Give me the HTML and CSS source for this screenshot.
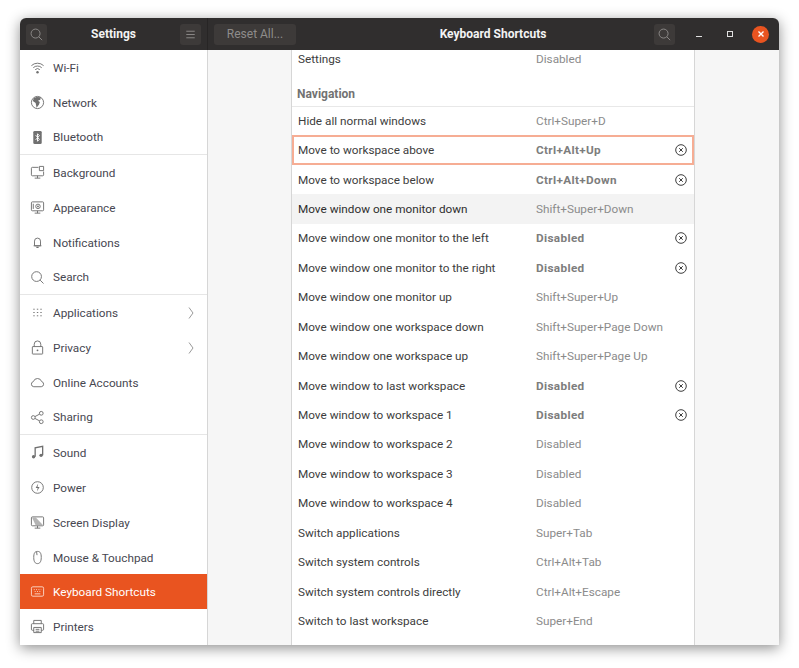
FILE: index.html
```html
<!DOCTYPE html>
<html lang="en">
<head>
    <meta charset="UTF-8">
    <title>Keyboard Shortcuts</title>
    <link rel="stylesheet" href="styles.css">
</head>
<body>
    <svg class="defs" aria-hidden="true">
        <symbol id="i-clear" viewBox="0 0 12 12">
            <circle cx="6" cy="6" r="5.3" fill="none" stroke="currentColor"/>
            <path d="M4.2 4.2l3.6 3.6M7.8 4.2l-3.6 3.6" fill="none" stroke="currentColor"/>
        </symbol>
    </svg>

    <div class="window">
        <header class="titlebar">
            <div class="bar-left">
                <button class="hb-btn icon-btn">
                    <svg viewBox="0 0 16 16" class="hb-icon"><circle cx="7" cy="7" r="4.8"/><path d="M10.5 10.5l3.5 3.5"/></svg>
                </button>
                <div class="bar-title">Settings</div>
                <button class="hb-btn icon-btn">
                    <svg viewBox="0 0 16 16" class="hb-icon"><path d="M3.5 4.5h9M3.5 8h9M3.5 11.5h9"/></svg>
                </button>
            </div>
            <div class="bar-right">
                <button class="hb-btn reset-btn">Reset All...</button>
                <div class="bar-title main-title">Keyboard Shortcuts</div>
                <button class="hb-btn icon-btn">
                    <svg viewBox="0 0 16 16" class="hb-icon"><circle cx="7" cy="7" r="4.8"/><path d="M10.5 10.5l3.5 3.5"/></svg>
                </button>
                <div class="win-controls">
                    <span class="win-btn"><span class="win-min"></span></span>
                    <span class="win-btn"><span class="win-max"></span></span>
                    <span class="win-btn win-close">
                        <svg viewBox="0 0 16 16"><path d="M5.5 5.5l5 5M10.5 5.5l-5 5"/></svg>
                    </span>
                </div>
            </div>
        </header>

        <div class="main">
            <nav class="sidebar">
                <div class="nav-item">
                    <svg viewBox="0 0 16 16" class="nav-icon"><path d="M1.5 6a9.5 9.5 0 0 1 13 0M3.5 8.2a6.6 6.6 0 0 1 9 0M5.5 10.3a3.6 3.6 0 0 1 5 0"/><circle cx="8" cy="13" r="1.3" class="solid"/></svg>
                    Wi-Fi
                </div>
                <div class="nav-item">
                    <svg viewBox="0 0 16 16" class="nav-icon"><circle cx="8" cy="8" r="6.5"/><path d="M7 2L4 3.5 3 6.5l3 2 1 5 2.500-3 1-3-2-1.500L11 5l.5-2.500z" class="solid"/></svg>
                    Network
                </div>
                <div class="nav-item nav-end">
                    <svg viewBox="0 0 16 16" class="nav-icon"><rect x="3.5" y="1" width="9" height="14" rx="1.5" class="solid"/><path d="M6 5.5l4 4.5-2 2V4l2 2-4 4.5" class="inv"/></svg>
                    Bluetooth
                </div>
                <div class="nav-item">
                    <svg viewBox="0 0 16 16" class="nav-icon"><path d="M9 2.5H2.5a1 1 0 0 0-1 1v7a1 1 0 0 0 1 1h11a1 1 0 0 0 1-1V7M5 14h6M8 11.5V14"/><path d="M10 1.5h4.500V6H10z"/></svg>
                    Background
                </div>
                <div class="nav-item">
                    <svg viewBox="0 0 16 16" class="nav-icon"><rect x="1.5" y="2" width="13" height="9.5" rx="1"/><path d="M5 14h6M8 11.500V14M3.500 4v5.500"/><circle cx="8.5" cy="6.8" r="2.4"/><circle cx="8.5" cy="6.8" r="1" class="solid"/></svg>
                    Appearance
                </div>
                <div class="nav-item">
                    <svg viewBox="0 0 16 16" class="nav-icon"><path d="M4.800 11.500V6.500a3.200 3.200 0 0 1 6.400 0v5zM3.800 11.500h8.400"/><path d="M6.800 13.200h2.400" class="thick"/></svg>
                    Notifications
                </div>
                <div class="nav-item nav-end">
                    <svg viewBox="0 0 16 16" class="nav-icon"><circle cx="7" cy="7" r="5.2"/><path d="M10.800 10.800l3.600 3.600"/></svg>
                    Search
                </div>
                <div class="nav-item">
                    <svg viewBox="0 0 16 16" class="nav-icon dots"><path d="M3.500 4.500h1.500M7.300 4.500h1.500M11 4.500h1.500M3.500 8h1.500M7.300 8h1.500M11 8h1.500M3.500 11.500h1.500M7.300 11.500h1.500M11 11.500h1.500"/></svg>
                    Applications
                    <svg viewBox="0 0 8 14" class="chevron"><path d="M2 1.500l4 5.500-4 5.500"/></svg>
                </div>
                <div class="nav-item">
                    <svg viewBox="0 0 16 16" class="nav-icon"><rect x="2.5" y="7" width="11" height="8" rx=".5"/><path d="M4.500 7V4.500a3.500 3.500 0 0 1 7 0V7"/><circle cx="8" cy="11" r="1" class="solid"/></svg>
                    Privacy
                    <svg viewBox="0 0 8 14" class="chevron"><path d="M2 1.500l4 5.500-4 5.500"/></svg>
                </div>
                <div class="nav-item">
                    <svg viewBox="0 0 16 16" class="nav-icon"><path d="M4 12.500a2.800 2.800 0 0 1-.4-5.500 4.600 4.600 0 0 1 8.800 0 2.800 2.800 0 0 1-.4 5.500z"/></svg>
                    Online Accounts
                </div>
                <div class="nav-item nav-end">
                    <svg viewBox="0 0 16 16" class="nav-icon"><circle cx="3.5" cy="8" r="2"/><circle cx="12" cy="3.5" r="2"/><circle cx="12" cy="12.5" r="2"/><path d="M5.300 7l4.900-2.600M5.300 9l4.900 2.600"/></svg>
                    Sharing
                </div>
                <div class="nav-item">
                    <svg viewBox="0 0 16 16" class="nav-icon"><path d="M5.500 12.500V3l8-1.500v9.500" class="thick"/><circle cx="3.8" cy="12.5" r="1.8" class="solid"/><circle cx="11.8" cy="11" r="1.8" class="solid"/></svg>
                    Sound
                </div>
                <div class="nav-item">
                    <svg viewBox="0 0 16 16" class="nav-icon"><circle cx="8" cy="8" r="6.2"/><path d="M8.800 3.800L6 8.600h2.200L7.400 12.200 10.200 7.400H8z" class="solid"/></svg>
                    Power
                </div>
                <div class="nav-item">
                    <svg viewBox="0 0 16 16" class="nav-icon"><rect x="1.5" y="2" width="13" height="9.5" rx="1"/><path d="M5 14h6M8 11.500V14"/><path d="M2 2.500h4l8 8.500H6z" class="solid light"/></svg>
                    Screen Display
                </div>
                <div class="nav-item">
                    <svg viewBox="0 0 16 16" class="nav-icon"><path d="M8 1.500c3 0 4 2 4 6.500 0 4.500-1.500 6.500-4 6.500S4 12.500 4 8c0-4.500 1-6.500 4-6.500zM7 1.800l.5 3.700"/></svg>
                    Mouse &amp; Touchpad
                </div>
                <div class="nav-item selected">
                    <svg viewBox="0 0 16 16" class="nav-icon"><rect x="1.5" y="3" width="13" height="10" rx="1.5"/><path d="M4 6h1M6.500 6h1M9 6h1M11.500 6h.5M5 8h1M7.500 8h1M10 8h1M5 10.500h6"/></svg>
                    Keyboard Shortcuts
                </div>
                <div class="nav-item">
                    <svg viewBox="0 0 16 16" class="nav-icon"><path d="M4 5V1.500h8V5M4 12H2.500a1 1 0 0 1-1-1V6a1 1 0 0 1 1-1h11a1 1 0 0 1 1 1v5a1 1 0 0 1-1 1H12"/><path d="M4 9h8v5.500H4zM6 11h4M6 13h4"/></svg>
                    Printers
                </div>
            </nav>

            <section class="content">
                <div class="panel">
                    <div class="shortcuts">
                        <div class="row"><span class="name">Settings</span><span class="accel">Disabled</span></div>
                        <h3 class="group-title">Navigation</h3>
                        <div class="row first"><span class="name">Hide all normal windows</span><span class="accel">Ctrl+Super+D</span></div>
                        <div class="row focused"><span class="name">Move to workspace above</span><span class="accel edited">Ctrl+Alt+Up</span><svg class="clear"><use href="#i-clear"/></svg></div>
                        <div class="row"><span class="name">Move to workspace below</span><span class="accel edited">Ctrl+Alt+Down</span><svg class="clear"><use href="#i-clear"/></svg></div>
                        <div class="row hover"><span class="name">Move window one monitor down</span><span class="accel">Shift+Super+Down</span></div>
                        <div class="row"><span class="name">Move window one monitor to the left</span><span class="accel edited">Disabled</span><svg class="clear"><use href="#i-clear"/></svg></div>
                        <div class="row"><span class="name">Move window one monitor to the right</span><span class="accel edited">Disabled</span><svg class="clear"><use href="#i-clear"/></svg></div>
                        <div class="row"><span class="name">Move window one monitor up</span><span class="accel">Shift+Super+Up</span></div>
                        <div class="row"><span class="name">Move window one workspace down</span><span class="accel">Shift+Super+Page Down</span></div>
                        <div class="row"><span class="name">Move window one workspace up</span><span class="accel">Shift+Super+Page Up</span></div>
                        <div class="row"><span class="name">Move window to last workspace</span><span class="accel edited">Disabled</span><svg class="clear"><use href="#i-clear"/></svg></div>
                        <div class="row"><span class="name">Move window to workspace 1</span><span class="accel edited">Disabled</span><svg class="clear"><use href="#i-clear"/></svg></div>
                        <div class="row"><span class="name">Move window to workspace 2</span><span class="accel">Disabled</span></div>
                        <div class="row"><span class="name">Move window to workspace 3</span><span class="accel">Disabled</span></div>
                        <div class="row"><span class="name">Move window to workspace 4</span><span class="accel">Disabled</span></div>
                        <div class="row"><span class="name">Switch applications</span><span class="accel">Super+Tab</span></div>
                        <div class="row"><span class="name">Switch system controls</span><span class="accel">Ctrl+Alt+Tab</span></div>
                        <div class="row"><span class="name">Switch system controls directly</span><span class="accel">Ctrl+Alt+Escape</span></div>
                        <div class="row"><span class="name">Switch to last workspace</span><span class="accel">Super+End</span></div>
                    </div>
                </div>
            </section>
        </div>
    </div>
</body>
</html>
```

FILE: styles.css
```css
* {
    box-sizing: border-box;
}
body {
    margin: 0;
    height: 668px;
    overflow: hidden;
    background: #fff;
    font-family: Roboto, sans-serif;
    font-size: 11.75px;
    color: #3d3d3d;
}
.defs {
    width: 0;
    height: 0;
    overflow: hidden;
    display: block;
}
.window {
    width: 759px;
    height: 627px;
    margin: 18px 0 0 20px;
    display: flex;
    flex-direction: column;
    border-radius: 6px 6px 0 0;
    box-shadow: 0 3px 14px rgba(0, 0, 0, 0.45);
    overflow: hidden;
    background: #f6f6f6;
}

/* header bar */
.titlebar {
    height: 32px;
    flex: none;
    display: flex;
    background: #302e2e;
    color: #f3f3f3;
}
.bar-left {
    width: 188px;
    flex: none;
    display: flex;
    align-items: center;
    padding: 0 6px;
    border-right: 1px solid #272525;
}
.bar-right {
    flex: 1;
    display: flex;
    align-items: center;
    padding-left: 6px;
}
.bar-title {
    flex: 1;
    text-align: center;
    font-weight: 700;
    font-size: 12px;
}
.main-title {
    margin-left: 36px;
}
.hb-btn {
    height: 21px;
    border: none;
    border-radius: 3px;
    background: #3d3a39;
    color: #8e8c8b;
    font-family: inherit;
    font-size: 12px;
    padding: 0;
}
.icon-btn {
    width: 21px;
    display: flex;
    align-items: center;
    justify-content: center;
}
.reset-btn {
    width: 82px;
}
.hb-icon {
    width: 15px;
    height: 15px;
    fill: none;
    stroke: #8e8c8b;
    stroke-width: 1;
}
.win-controls {
    width: 104px;
    flex: none;
    display: flex;
    align-items: center;
    padding-left: 15px;
    gap: 14px;
}
.win-btn {
    width: 17px;
    height: 17px;
    display: flex;
    align-items: center;
    justify-content: center;
}
.win-min {
    width: 6px;
    height: 1px;
    margin-top: 5px;
    background: #e0e0e0;
}
.win-max {
    width: 6px;
    height: 6px;
    border: 1px solid #e0e0e0;
}
.win-close {
    border-radius: 50%;
    background: #e95420;
}
.win-close svg {
    width: 16px;
    height: 16px;
    fill: none;
    stroke: #fff;
    stroke-width: 1.4;
}

.main {
    flex: 1;
    display: flex;
    min-height: 0;
}

/* sidebar */
.sidebar {
    width: 188px;
    flex: none;
    background: #fff;
    border-right: 1px solid #d6d6d6;
}
.nav-item {
    height: 35px;
    display: flex;
    align-items: center;
    padding-left: 10px;
    color: #474751;
}
.nav-end {
    border-bottom: 1px solid #e6e6e6;
}
.nav-icon {
    width: 15px;
    height: 15px;
    margin-right: 8px;
    fill: none;
    stroke: #707070;
    stroke-width: 1;
}
.nav-icon .solid {
    fill: #707070;
    stroke: none;
}
.nav-icon .solid.light {
    fill: #b4b4b4;
}
.nav-icon .inv {
    stroke: #fff;
}
.nav-icon .thick {
    stroke-width: 1.4;
}
.chevron {
    width: 8px;
    height: 14px;
    margin-left: auto;
    margin-right: 12px;
    fill: none;
    stroke: #9a9a9a;
    stroke-width: 1;
}
.selected {
    margin-top: -1px;
    background: #e95420;
    color: #fff;
}
.selected .nav-icon {
    stroke: #fbd5c6;
}

/* shortcuts list */
.content {
    flex: 1;
    display: flex;
    justify-content: center;
    min-width: 0;
    padding-right: 1px;
}
.panel {
    width: 404px;
    background: #fff;
    border-left: 1px solid #d6d6d6;
    border-right: 1px solid #d6d6d6;
    overflow: hidden;
}
.shortcuts {
    margin-top: -6px;
}
.row {
    height: 29.45px;
    display: flex;
    align-items: center;
    padding-left: 6px;
    padding-right: 7px;
}
.row.first {
    border-top: 1px solid #e8e8e8;
}
.row.focused {
    border: 2px solid #f6ad94;
    padding-left: 4px;
    padding-right: 5px;
}
.row.hover {
    background: #f3f3f3;
    color: #2e2e2e;
}
.name {
    width: 238px;
    flex: none;
}
.accel {
    color: #8b8b8b;
}
.accel.edited {
    font-weight: 700;
    letter-spacing: 0.35px;
    color: #7d7d7d;
}
.clear {
    width: 12px;
    height: 12px;
    margin-left: auto;
    color: #3d3d3d;
}
.group-title {
    margin: 0;
    height: 32.5px;
    padding: 13px 0 0 5px;
    font-size: 12px;
    font-weight: 700;
    line-height: 17px;
    color: #727272;
}
```
